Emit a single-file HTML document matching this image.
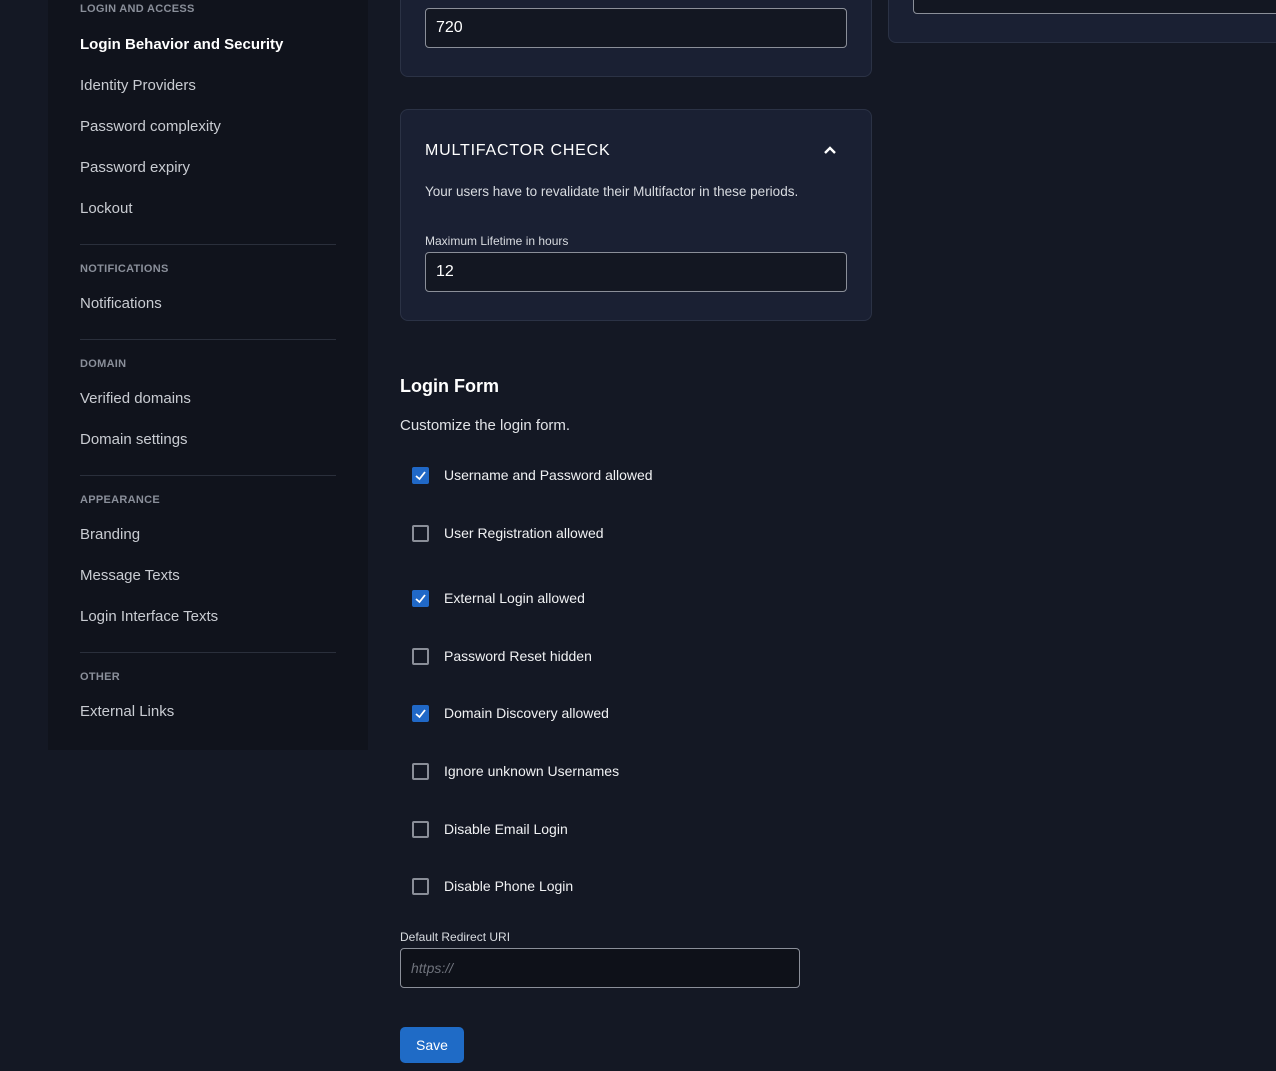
<!DOCTYPE html>
<html><head><meta charset="utf-8"><style>
*{box-sizing:border-box;margin:0;padding:0}
body{width:1276px;height:1071px;background:#141824;font-family:"Liberation Sans",sans-serif;color:#fff;position:relative;overflow:hidden}
.a{position:absolute}
.side{left:48px;top:-10px;width:320px;height:760px;background:#10131c}
.sh{position:absolute;left:80px;font-size:11px;font-weight:bold;color:#8a8f9a;letter-spacing:.3px}
.si{position:absolute;left:80px;font-size:15px;color:#c9ccd2}
.hr{position:absolute;left:80px;width:256px;height:1px;background:#2a2f3b}
.card{position:absolute;background:#1a2033;border:1px solid #2b3245;border-radius:8px}
.inp{position:absolute;background:#131722;border:1px solid #8b8f99;border-radius:4px;font-size:16px;padding:10px 10px 8px;color:#fff}
.cb{position:absolute;left:412px;width:17px;height:17px;border:2px solid #8a8e98;border-radius:2px}
.cb.on{background:#2068c7;border-color:#2068c7}
.cl{position:absolute;left:444px;font-size:14px;color:#f0f1f3}
</style></head><body>
<div class="a side"></div>
<div class="sh" style="top:3px">LOGIN AND ACCESS</div>
<div class="si" style="top:36px;color:#fff;font-weight:bold">Login Behavior and Security</div>
<div class="si" style="top:77px">Identity Providers</div>
<div class="si" style="top:118px">Password complexity</div>
<div class="si" style="top:159px">Password expiry</div>
<div class="si" style="top:200px">Lockout</div>
<div class="hr" style="top:244px"></div>
<div class="sh" style="top:263px">NOTIFICATIONS</div>
<div class="si" style="top:295px">Notifications</div>
<div class="hr" style="top:339px"></div>
<div class="sh" style="top:358px">DOMAIN</div>
<div class="si" style="top:390px">Verified domains</div>
<div class="si" style="top:431px">Domain settings</div>
<div class="hr" style="top:475px"></div>
<div class="sh" style="top:494px">APPEARANCE</div>
<div class="si" style="top:526px">Branding</div>
<div class="si" style="top:567px">Message Texts</div>
<div class="si" style="top:608px">Login Interface Texts</div>
<div class="hr" style="top:652px"></div>
<div class="sh" style="top:671px">OTHER</div>
<div class="si" style="top:703px">External Links</div>

<div class="card" style="left:400px;top:-20px;width:472px;height:97px"></div>
<div class="inp" style="left:425px;top:8px;width:422px;height:40px">720</div>
<div class="card" style="left:888px;top:-20px;width:420px;height:63px"></div>
<div class="inp" style="left:913px;top:-20px;width:400px;height:34px"></div>

<div class="card" style="left:400px;top:109px;width:472px;height:212px"></div>
<div class="a" style="left:425px;top:142px;font-size:16px;letter-spacing:.8px;font-weight:500">MULTIFACTOR CHECK</div>
<svg class="a" style="left:823px;top:143px" width="14" height="14" viewBox="0 0 14 14"><path d="M2 10L7 5L12 10" stroke="#fff" stroke-width="2.4" fill="none"/></svg>
<div class="a" style="left:425px;top:184px;font-size:13.5px;color:#d8dbe0">Your users have to revalidate their Multifactor in these periods.</div>
<div class="a" style="left:425px;top:234px;font-size:12px;color:#d8dbe0">Maximum Lifetime in hours</div>
<div class="inp" style="left:425px;top:252px;width:422px;height:40px">12</div>

<div class="a" style="left:400px;top:376px;font-size:18px;font-weight:bold">Login Form</div>
<div class="a" style="left:400px;top:417px;font-size:15px;color:#e0e2e6">Customize the login form.</div>

<div class="cb on" style="top:467px"></div><div class="cl" style="top:467px">Username and Password allowed</div>
<div class="cb" style="top:525px"></div><div class="cl" style="top:525px">User Registration allowed</div>
<div class="cb on" style="top:590px"></div><div class="cl" style="top:590px">External Login allowed</div>
<div class="cb" style="top:648px"></div><div class="cl" style="top:648px">Password Reset hidden</div>
<div class="cb on" style="top:705px"></div><div class="cl" style="top:705px">Domain Discovery allowed</div>
<div class="cb" style="top:763px"></div><div class="cl" style="top:763px">Ignore unknown Usernames</div>
<div class="cb" style="top:821px"></div><div class="cl" style="top:821px">Disable Email Login</div>
<div class="cb" style="top:878px"></div><div class="cl" style="top:878px">Disable Phone Login</div>
<svg class="a" style="left:412px;top:467px" width="17" height="17"><path d="M4 9L7.5 12L13 5" stroke="#fff" stroke-width="1.8" fill="none"/></svg>
<svg class="a" style="left:412px;top:590px" width="17" height="17"><path d="M4 9L7.5 12L13 5" stroke="#fff" stroke-width="1.8" fill="none"/></svg>
<svg class="a" style="left:412px;top:705px" width="17" height="17"><path d="M4 9L7.5 12L13 5" stroke="#fff" stroke-width="1.8" fill="none"/></svg>

<div class="a" style="left:400px;top:930px;font-size:12px;color:#d8dbe0">Default Redirect URI</div>
<div class="inp" style="left:400px;top:948px;width:400px;height:40px;background:#0e1119;font-size:14px;font-style:italic;color:#6f737c;padding-top:11px">https://</div>
<div class="a" style="left:400px;top:1027px;width:64px;height:36px;background:#1f6bc6;border-radius:5px;font-size:14px;text-align:center;line-height:37px">Save</div>
</body></html>
